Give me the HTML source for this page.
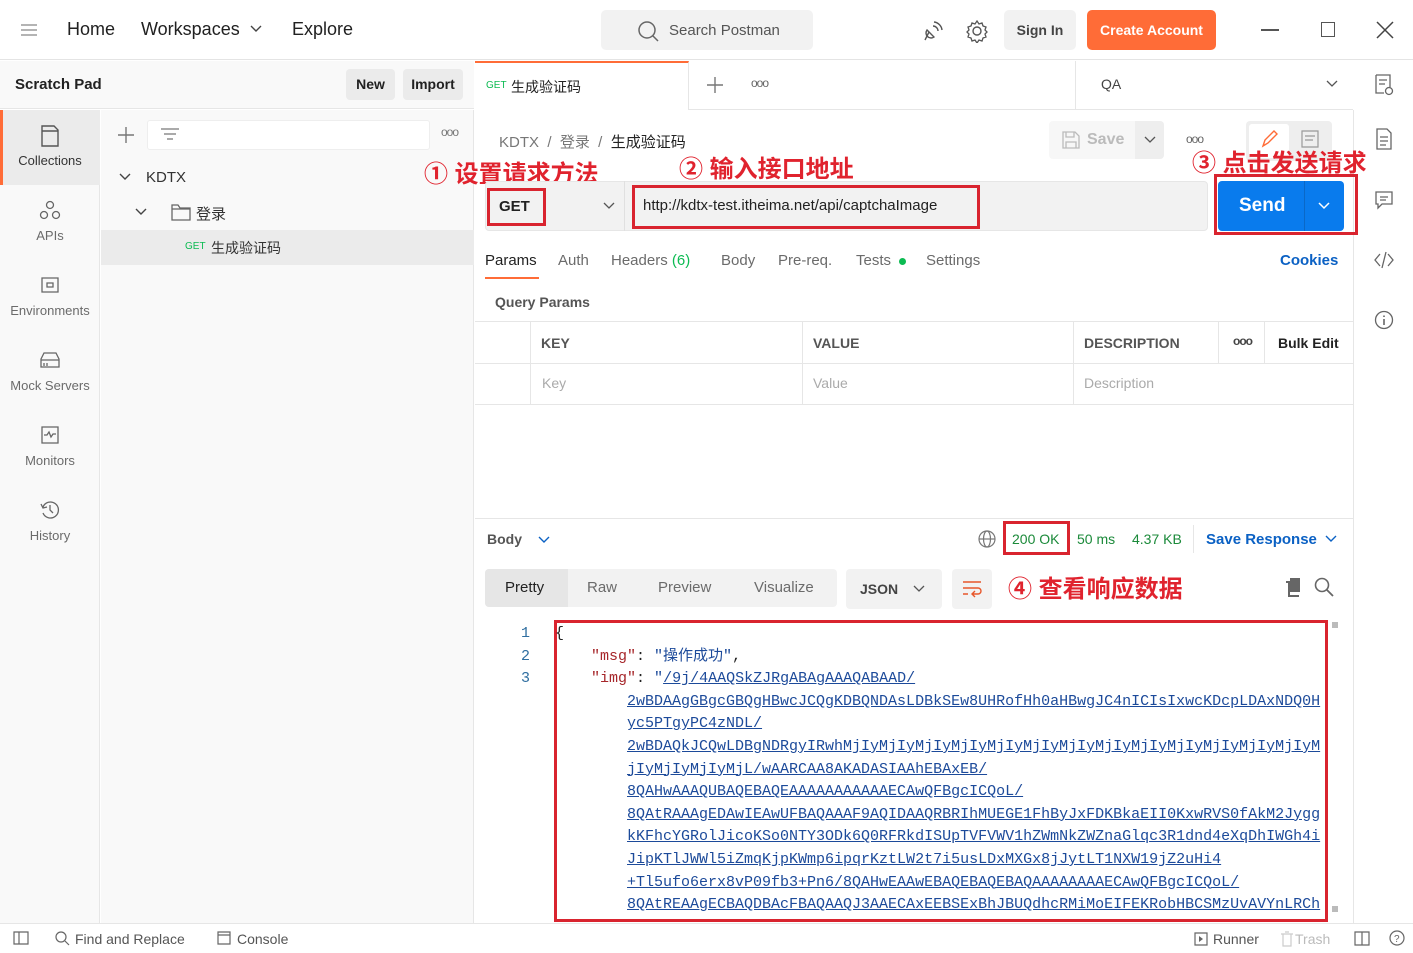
<!DOCTYPE html>
<html><head><meta charset="utf-8"><style>
*{box-sizing:border-box;margin:0;padding:0}
body{width:1413px;height:953px;overflow:hidden;background:#fff;font-family:"Liberation Sans","Noto Sans CJK SC",sans-serif;color:#212121;position:relative;font-size:14px}
.a{position:absolute}
.g{color:#6b6b6b}
.red{border:3px solid #d9242f}
.ann{color:#e0232e;font-weight:bold;font-size:24px;font-family:"Liberation Sans","Noto Sans CJK SC",sans-serif;white-space:nowrap}
.code{font-family:"Liberation Mono","Noto Sans CJK SC",monospace;font-size:15px;line-height:22.6px;white-space:pre}
.u{color:#1c4a9a;text-decoration:underline}
svg{position:absolute}
</style></head><body>
<div class="a" style="left:0;top:0;width:1413px;height:60px;border-bottom:1px solid #e4e4e4;background:#fff"></div>
<svg style="left:20px;top:23px" width="18" height="14"><path d="M1 2h16M1 7h16M1 12h16" stroke="#888" stroke-width="1.3"/></svg>
<div class="a" style="left:67px;top:19px;font-size:18px">Home</div>
<div class="a" style="left:141px;top:19px;font-size:18px">Workspaces</div>
<svg style="left:250px;top:25px" width="12" height="8"><path d="M1 1l5 5 5-5" stroke="#444" fill="none" stroke-width="1.4"/></svg>
<div class="a" style="left:292px;top:19px;font-size:18px">Explore</div>
<div class="a" style="left:601px;top:10px;width:212px;height:40px;background:#f2f2f2;border-radius:5px"></div>
<svg style="left:637px;top:20px" width="22" height="22"><circle cx="10" cy="10" r="8" stroke="#666" fill="none" stroke-width="1.5"/><path d="M16 16l5 5" stroke="#666" stroke-width="1.5"/></svg>
<div class="a g" style="left:669px;top:22px;font-size:15px;color:#555">Search Postman</div>
<svg style="left:921px;top:20px" width="22" height="22"><path d="M4 20l4-8 M6 10a5 5 0 0 0 7 7z M12 6a5 5 0 0 1 5 5 M13 2a9 9 0 0 1 8 8" stroke="#555" fill="none" stroke-width="1.4"/></svg>
<svg style="left:965px;top:19px" width="24" height="24"><circle cx="12" cy="12" r="4" stroke="#555" fill="none" stroke-width="1.4"/><path d="M12 2l2 3 3-1 1 3 3 1-1 3 2 2-2 2 1 3-3 1-1 3-3-1-2 3-2-3-3 1-1-3-3-1 1-3-2-2 2-2-1-3 3-1 1-3 3 1z" stroke="#555" fill="none" stroke-width="1.3"/></svg>
<div class="a" style="left:1004px;top:10px;width:72px;height:40px;background:#f2f2f2;border-radius:5px;text-align:center;line-height:40px;font-weight:bold;color:#444;font-size:14px">Sign In</div>
<div class="a" style="left:1087px;top:10px;width:129px;height:40px;background:#ff6c37;border-radius:5px;text-align:center;line-height:40px;font-weight:bold;color:#fff;font-size:14px">Create Account</div>
<div class="a" style="left:1261px;top:29px;width:18px;height:1.5px;background:#555"></div>
<div class="a" style="left:1321px;top:22px;width:14px;height:15px;border:1.3px solid #555"></div>
<svg style="left:1376px;top:21px" width="18" height="18"><path d="M1 1l16 16M17 1L1 17" stroke="#444" stroke-width="1.5"/></svg>

<div class="a" style="left:0;top:61px;width:474px;height:48px;background:#f9f9f9;border-bottom:1px solid #e6e6e6"></div>
<div class="a" style="left:15px;top:76px;font-size:15px;font-weight:bold;color:#222">Scratch Pad</div>
<div class="a" style="left:346px;top:69px;width:49px;height:31px;background:#ebebeb;border-radius:4px;text-align:center;line-height:31px;font-weight:bold;font-size:14px">New</div>
<div class="a" style="left:403px;top:69px;width:60px;height:31px;background:#ebebeb;border-radius:4px;text-align:center;line-height:31px;font-weight:bold;font-size:14px">Import</div>
<div class="a" style="left:0;top:110px;width:100px;height:813px;background:#f9f9f9;border-right:1px solid #e6e6e6"></div>
<div class="a" style="left:0;top:110px;width:100px;height:75px;background:#ebebeb;border-left:3px solid #ff6c37"></div>
<svg style="left:40px;top:125px" width="20" height="22"><path d="M2 1h12l4 4v16H2z M2 6h16" stroke="#555" fill="none" stroke-width="1.4"/></svg>
<div class="a" style="left:0;top:153px;width:100px;text-align:center;font-size:13px;color:#333">Collections</div>
<svg style="left:39px;top:200px" width="22" height="20"><circle cx="11" cy="5" r="3.5" stroke="#666" fill="none" stroke-width="1.3"/><circle cx="5" cy="15" r="3.5" stroke="#666" fill="none" stroke-width="1.3"/><circle cx="17" cy="15" r="3.5" stroke="#666" fill="none" stroke-width="1.3"/></svg>
<div class="a g" style="left:0;top:228px;width:100px;text-align:center;font-size:13px">APIs</div>
<svg style="left:40px;top:276px" width="20" height="20"><path d="M2 2h16v14H2z M7 7h6v4H7z" stroke="#666" fill="none" stroke-width="1.3"/></svg>
<div class="a g" style="left:0;top:303px;width:100px;text-align:center;font-size:13px">Environments</div>
<svg style="left:39px;top:351px" width="22" height="18"><path d="M2 8l3-6h12l3 6v8H2z M2 9h18 M5 12v3M8 12v3" stroke="#666" fill="none" stroke-width="1.3"/></svg>
<div class="a g" style="left:0;top:378px;width:100px;text-align:center;font-size:13px">Mock Servers</div>
<svg style="left:40px;top:425px" width="20" height="20"><path d="M2 2h16v16H2z M4 10h3l2-3 2 5 2-3h3" stroke="#666" fill="none" stroke-width="1.3"/></svg>
<div class="a g" style="left:0;top:453px;width:100px;text-align:center;font-size:13px">Monitors</div>
<svg style="left:39px;top:499px" width="22" height="22"><path d="M4 8a8 8 0 1 1 0 6 M2 5l2 4 4-1 M11 6v5l3 3" stroke="#666" fill="none" stroke-width="1.3"/></svg>
<div class="a g" style="left:0;top:528px;width:100px;text-align:center;font-size:13px">History</div>

<div class="a" style="left:101px;top:110px;width:373px;height:813px;background:#f9f9f9;border-right:1px solid #e6e6e6"></div>
<svg style="left:117px;top:126px" width="18" height="18"><path d="M9 1v16M1 9h16" stroke="#777" stroke-width="1.4"/></svg>
<div class="a" style="left:147px;top:120px;width:283px;height:30px;background:#fff;border:1px solid #eee;border-radius:3px"></div>
<svg style="left:160px;top:127px" width="20" height="16"><path d="M1 2h18M4 7h12M7 12h6" stroke="#777" stroke-width="1.3"/></svg>
<div class="a" style="left:441px;top:125px;font-size:12px;color:#777;letter-spacing:-1px">ooo</div>
<svg style="left:119px;top:173px" width="12" height="8"><path d="M1 1l5 5 5-5" stroke="#444" fill="none" stroke-width="1.4"/></svg>
<div class="a" style="left:146px;top:169px;font-size:15px;color:#333">KDTX</div>
<svg style="left:135px;top:208px" width="12" height="8"><path d="M1 1l5 5 5-5" stroke="#444" fill="none" stroke-width="1.4"/></svg>
<svg style="left:171px;top:203px" width="20" height="18"><path d="M1 2h6l2 3h10v12H1z M1 6h18" stroke="#666" fill="none" stroke-width="1.3"/></svg>
<div class="a" style="left:196px;top:203px;font-size:15px;color:#333">登录</div>
<div class="a" style="left:101px;top:230px;width:373px;height:35px;background:#ebebeb"></div>
<div class="a" style="left:185px;top:241px;font-size:10px;color:#0cbb52">GET</div>
<div class="a" style="left:211px;top:238px;font-size:14px;color:#333">生成验证码</div>

<div class="a" style="left:475px;top:61px;width:878px;height:49px;border-bottom:1px solid #e6e6e6"></div>
<div class="a" style="left:475px;top:61px;width:214px;height:49px;border-top:2px solid #ff6c37;border-right:1px solid #e6e6e6;background:#fff"></div>
<div class="a" style="left:486px;top:80px;font-size:10px;color:#0cbb52">GET</div>
<div class="a" style="left:511px;top:77px;font-size:14px">生成验证码</div>
<svg style="left:706px;top:76px" width="18" height="18"><path d="M9 1v16M1 9h16" stroke="#777" stroke-width="1.4"/></svg>
<div class="a" style="left:751px;top:76px;font-size:12px;color:#666;letter-spacing:-1px">ooo</div>
<div class="a" style="left:1075px;top:61px;width:1px;height:49px;background:#e6e6e6"></div>
<div class="a" style="left:1101px;top:76px;font-size:14px;color:#444">QA</div>
<svg style="left:1326px;top:80px" width="12" height="8"><path d="M1 1l5 5 5-5" stroke="#555" fill="none" stroke-width="1.3"/></svg>

<div class="a" style="left:1353px;top:110px;width:1px;height:813px;background:#e6e6e6"></div>
<svg style="left:1374px;top:74px" width="20" height="22"><path d="M2 1h14v12 M2 1v18h8 M5 6h8M5 10h6" stroke="#666" fill="none" stroke-width="1.3"/><circle cx="15" cy="17" r="3.5" stroke="#666" fill="none" stroke-width="1.3"/></svg>
<svg style="left:1375px;top:128px" width="18" height="22"><path d="M2 1h10l4 4v16H2z M5 9h8M5 13h8M5 17h6" stroke="#666" fill="none" stroke-width="1.3"/></svg>
<svg style="left:1374px;top:190px" width="20" height="20"><path d="M2 2h16v12H8l-4 4v-4H2z M6 7h8M6 10h6" stroke="#666" fill="none" stroke-width="1.3"/></svg>
<svg style="left:1373px;top:250px" width="22" height="20"><path d="M7 4l-5 6 5 6 M15 4l5 6-5 6 M13 2l-4 16" stroke="#666" fill="none" stroke-width="1.3"/></svg>
<svg style="left:1374px;top:310px" width="20" height="20"><circle cx="10" cy="10" r="8.5" stroke="#666" fill="none" stroke-width="1.3"/><path d="M10 9v6M10 5.5v1.5" stroke="#666" stroke-width="1.6"/></svg>

<div class="a" style="left:499px;top:131px;font-size:15px;color:#777">KDTX &nbsp;/ &nbsp;登录 &nbsp;/ &nbsp;<span style="color:#222">生成验证码</span></div>
<div class="a" style="left:1049px;top:121px;width:115px;height:38px;background:#f7f7f7;border-radius:4px"></div>
<div class="a" style="left:1135px;top:121px;width:29px;height:38px;background:#eee;border-radius:0 4px 4px 0"></div>
<svg style="left:1062px;top:131px" width="18" height="18"><path d="M1 1h12l4 4v12H1z M4 1v5h8V1 M4 17v-6h10v6" stroke="#bbb" fill="none" stroke-width="1.3"/></svg>
<div class="a" style="left:1087px;top:131px;font-size:16px;color:#bbb;font-weight:bold">Save</div>
<svg style="left:1144px;top:136px" width="12" height="8"><path d="M1 1l5 5 5-5" stroke="#555" fill="none" stroke-width="1.3"/></svg>
<div class="a" style="left:1186px;top:132px;font-size:12px;color:#666;letter-spacing:-1px">ooo</div>
<div class="a" style="left:1246px;top:121px;width:86px;height:40px;background:#eee;border-radius:4px"></div>
<div class="a" style="left:1249px;top:124px;width:40px;height:34px;background:#fff;border-radius:3px"></div>
<svg style="left:1260px;top:129px" width="20" height="20"><path d="M3 17l2-6 9-9 3 3-9 9z" stroke="#ff6c37" fill="none" stroke-width="1.4"/></svg>
<svg style="left:1301px;top:130px" width="18" height="18"><path d="M1 1h16v16H1z M4 6h10M4 10h8" stroke="#999" fill="none" stroke-width="1.2"/></svg>

<div class="a ann" style="left:424px;top:154px">① 设置请求方法</div>
<div class="a ann" style="left:679px;top:149px">② 输入接口地址</div>
<div class="a ann" style="left:1192px;top:143px">③ 点击发送请求</div>
<div class="a ann" style="left:1008px;top:569px">④ 查看响应数据</div>

<div class="a" style="left:485px;top:181px;width:723px;height:50px;background:#f2f2f2;border:1px solid #e6e6e6;border-radius:4px"></div>
<div class="a" style="left:624px;top:181px;width:1px;height:50px;background:#e0e0e0"></div>
<div class="a red" style="left:487px;top:188px;width:59px;height:38px"></div>
<div class="a" style="left:499px;top:198px;font-size:15px;font-weight:bold">GET</div>
<svg style="left:603px;top:202px" width="12" height="8"><path d="M1 1l5 5 5-5" stroke="#555" fill="none" stroke-width="1.3"/></svg>
<div class="a red" style="left:632px;top:185px;width:348px;height:44px"></div>
<div class="a" style="left:643px;top:197px;font-size:15px;color:#222">http://kdtx-test.itheima.net/api/captchaImage</div>
<div class="a red" style="left:1214px;top:174px;width:144px;height:61px"></div>
<div class="a" style="left:1218px;top:181px;width:126px;height:50px;background:#097bed;border-radius:4px"></div>
<div class="a" style="left:1304px;top:181px;width:1px;height:50px;background:#0a68c7"></div>
<div class="a" style="left:1239px;top:195px;font-size:19px;font-weight:bold;color:#fff">Send</div>
<svg style="left:1318px;top:202px" width="12" height="8"><path d="M1 1l5 5 5-5" stroke="#fff" fill="none" stroke-width="1.5"/></svg>

<div class="a" style="left:485px;top:252px;font-size:15px;color:#222">Params</div>
<div class="a" style="left:485px;top:277px;width:54px;height:2px;background:#ff6c37"></div>
<div class="a g" style="left:558px;top:252px;font-size:15px">Auth</div>
<div class="a g" style="left:611px;top:252px;font-size:15px">Headers <span style="color:#0cbb52">(6)</span></div>
<div class="a g" style="left:721px;top:252px;font-size:15px">Body</div>
<div class="a g" style="left:778px;top:252px;font-size:15px">Pre-req.</div>
<div class="a g" style="left:856px;top:252px;font-size:15px">Tests</div>
<div class="a" style="left:899px;top:258px;width:7px;height:7px;border-radius:50%;background:#0cbb52"></div>
<div class="a g" style="left:926px;top:252px;font-size:15px">Settings</div>
<div class="a" style="left:1280px;top:252px;font-size:15px;color:#0b61c4;font-weight:bold">Cookies</div>
<div class="a" style="left:495px;top:294px;font-size:14px;font-weight:bold;color:#555">Query Params</div>

<div class="a" style="left:475px;top:321px;width:878px;height:84px;border-top:1px solid #e6e6e6;border-bottom:1px solid #e6e6e6"></div>
<div class="a" style="left:475px;top:363px;width:878px;height:1px;background:#e6e6e6"></div>
<div class="a" style="left:530px;top:321px;width:1px;height:84px;background:#e6e6e6"></div>
<div class="a" style="left:802px;top:321px;width:1px;height:84px;background:#e6e6e6"></div>
<div class="a" style="left:1073px;top:321px;width:1px;height:84px;background:#e6e6e6"></div>
<div class="a" style="left:1218px;top:321px;width:1px;height:42px;background:#e6e6e6"></div>
<div class="a" style="left:1264px;top:321px;width:1px;height:42px;background:#e6e6e6"></div>
<div class="a" style="left:541px;top:335px;font-size:14px;font-weight:bold;color:#555">KEY</div>
<div class="a" style="left:813px;top:335px;font-size:14px;font-weight:bold;color:#555">VALUE</div>
<div class="a" style="left:1084px;top:335px;font-size:14px;font-weight:bold;color:#555">DESCRIPTION</div>
<div class="a" style="left:1233px;top:334px;font-size:12px;color:#444;letter-spacing:-1px;font-weight:bold">ooo</div>
<div class="a" style="left:1278px;top:335px;font-size:14px;font-weight:bold;color:#222">Bulk Edit</div>
<div class="a" style="left:542px;top:375px;font-size:14px;color:#aaa">Key</div>
<div class="a" style="left:813px;top:375px;font-size:14px;color:#aaa">Value</div>
<div class="a" style="left:1084px;top:375px;font-size:14px;color:#aaa">Description</div>

<div class="a" style="left:475px;top:518px;width:878px;height:1px;background:#e6e6e6"></div>
<div class="a" style="left:487px;top:531px;font-size:14px;font-weight:bold;color:#555">Body</div>
<svg style="left:538px;top:536px" width="12" height="8"><path d="M1 1l5 5 5-5" stroke="#0b61c4" fill="none" stroke-width="1.4"/></svg>
<svg style="left:977px;top:529px" width="20" height="20"><circle cx="10" cy="10" r="8" stroke="#777" fill="none" stroke-width="1.2"/><ellipse cx="10" cy="10" rx="3.5" ry="8" stroke="#777" fill="none" stroke-width="1.2"/><path d="M2 10h16" stroke="#777" stroke-width="1.2"/></svg>
<div class="a red" style="left:1003px;top:521px;width:67px;height:34px"></div>
<div class="a" style="left:1012px;top:531px;font-size:14px;color:#1b8a3a">200 OK</div>
<div class="a" style="left:1077px;top:531px;font-size:14px;color:#1b8a3a">50 ms</div>
<div class="a" style="left:1132px;top:531px;font-size:14px;color:#1b8a3a">4.37 KB</div>
<div class="a" style="left:1193px;top:525px;width:1px;height:28px;background:#e6e6e6"></div>
<div class="a" style="left:1206px;top:531px;font-size:15px;color:#0b61c4;font-weight:bold">Save Response</div>
<svg style="left:1325px;top:535px" width="12" height="8"><path d="M1 1l5 5 5-5" stroke="#0b61c4" fill="none" stroke-width="1.4"/></svg>

<div class="a" style="left:485px;top:569px;width:352px;height:38px;background:#f2f2f2;border-radius:4px"></div>
<div class="a" style="left:485px;top:569px;width:83px;height:38px;background:#e6e6e6;border-radius:4px 0 0 4px"></div>
<div class="a" style="left:505px;top:579px;font-size:15px;color:#222">Pretty</div>
<div class="a g" style="left:587px;top:579px;font-size:15px">Raw</div>
<div class="a g" style="left:658px;top:579px;font-size:15px">Preview</div>
<div class="a g" style="left:754px;top:579px;font-size:15px">Visualize</div>
<div class="a" style="left:846px;top:569px;width:96px;height:40px;background:#f2f2f2;border-radius:4px"></div>
<div class="a" style="left:860px;top:581px;font-size:14px;font-weight:bold;color:#444">JSON</div>
<svg style="left:913px;top:585px" width="12" height="8"><path d="M1 1l5 5 5-5" stroke="#555" fill="none" stroke-width="1.3"/></svg>
<div class="a" style="left:952px;top:569px;width:40px;height:40px;background:#f2f2f2;border-radius:4px"></div>
<svg style="left:961px;top:579px" width="22" height="20"><path d="M2 3h18M2 9h15a3 3 0 0 1 0 6h-5 M14 12l-3 3 3 3 M2 15h5" stroke="#e8562a" fill="none" stroke-width="1.4"/></svg>
<svg style="left:1284px;top:577px" width="20" height="20"><path d="M6 1h10v14H6z" fill="#666"/><path d="M2 5h3v14h10" stroke="#666" fill="none" stroke-width="2"/></svg>
<svg style="left:1314px;top:577px" width="20" height="20"><circle cx="8" cy="8" r="6.5" stroke="#666" fill="none" stroke-width="1.6"/><path d="M13 13l6 6" stroke="#666" stroke-width="1.8"/></svg>

<div class="a code" style="left:505px;top:623px;width:25px;text-align:right;color:#2f6ea0">1
2
3</div>
<div class="a red" style="left:554px;top:620px;width:774px;height:302px"></div>
<div class="a" style="left:1332px;top:622px;width:6px;height:6px;background:#bbb"></div>
<div class="a" style="left:1332px;top:906px;width:6px;height:6px;background:#bbb"></div>
<div class="a code" style="left:555px;top:623px;color:#222">{
    <span style="color:#a6262a">"msg"</span>: <span style="color:#1c4a9a">"操作成功"</span>,
    <span style="color:#a6262a">"img"</span>: <span style="color:#1c4a9a">"</span><span class="u">/9j/4AAQSkZJRgABAgAAAQABAAD/</span>
        <span class="u">2wBDAAgGBgcGBQgHBwcJCQgKDBQNDAsLDBkSEw8UHRofHh0aHBwgJC4nICIsIxwcKDcpLDAxNDQ0H</span>
        <span class="u">yc5PTgyPC4zNDL/</span>
        <span class="u">2wBDAQkJCQwLDBgNDRgyIRwhMjIyMjIyMjIyMjIyMjIyMjIyMjIyMjIyMjIyMjIyMjIyMjIyMjIyM</span>
        <span class="u">jIyMjIyMjIyMjL/wAARCAA8AKADASIAAhEBAxEB/</span>
        <span class="u">8QAHwAAAQUBAQEBAQEAAAAAAAAAAAECAwQFBgcICQoL/</span>
        <span class="u">8QAtRAAAgEDAwIEAwUFBAQAAAF9AQIDAAQRBRIhMUEGE1FhByJxFDKBkaEII0KxwRVS0fAkM2Jygg</span>
        <span class="u">kKFhcYGRolJicoKSo0NTY3ODk6Q0RFRkdISUpTVFVWV1hZWmNkZWZnaGlqc3R1dnd4eXqDhIWGh4i</span>
        <span class="u">JipKTlJWWl5iZmqKjpKWmp6ipqrKztLW2t7i5usLDxMXGx8jJytLT1NXW19jZ2uHi4</span>
        <span class="u">+Tl5ufo6erx8vP09fb3+Pn6/8QAHwEAAwEBAQEBAQEBAQAAAAAAAAECAwQFBgcICQoL/</span>
        <span class="u">8QAtREAAgECBAQDBAcFBAQAAQJ3AAECAxEEBSExBhJBUQdhcRMiMoEIFEKRobHBCSMzUvAVYnLRCh</span></div>

<div class="a" style="left:0;top:923px;width:1413px;height:30px;background:#fff;border-top:1px solid #e6e6e6"></div>
<svg style="left:13px;top:931px" width="16" height="14"><path d="M1 1h14v12H1z M6 1v12" stroke="#666" fill="none" stroke-width="1.2"/></svg>
<svg style="left:55px;top:931px" width="15" height="15"><circle cx="6" cy="6" r="5" stroke="#666" fill="none" stroke-width="1.2"/><path d="M10 10l4 4" stroke="#666" stroke-width="1.2"/></svg>
<div class="a" style="left:75px;top:931px;font-size:14px;color:#555">Find and Replace</div>
<svg style="left:217px;top:931px" width="14" height="14"><path d="M1 1h12v12H1z M1 4h12" stroke="#666" fill="none" stroke-width="1.2"/></svg>
<div class="a" style="left:237px;top:931px;font-size:14px;color:#555">Console</div>
<svg style="left:1194px;top:932px" width="14" height="14"><path d="M1 1h12v12H1z" stroke="#666" fill="none" stroke-width="1.2"/><path d="M5 4l4 3-4 3z" fill="#666"/></svg>
<div class="a" style="left:1213px;top:931px;font-size:14px;color:#555">Runner</div>
<svg style="left:1280px;top:931px" width="14" height="16"><path d="M1 3h12M3 3v12h8V3 M5 1h4" stroke="#ccc" fill="none" stroke-width="1.2"/></svg>
<div class="a" style="left:1295px;top:931px;font-size:14px;color:#bbb">Trash</div>
<svg style="left:1354px;top:931px" width="16" height="15"><path d="M1 1h14v13H1z M8 1v13" stroke="#666" fill="none" stroke-width="1.2"/></svg>
<svg style="left:1389px;top:930px" width="16" height="16"><circle cx="8" cy="8" r="7" stroke="#666" fill="none" stroke-width="1.2"/><text x="5" y="12" font-size="10" fill="#666" font-family="Liberation Sans">?</text></svg>
</body></html>
